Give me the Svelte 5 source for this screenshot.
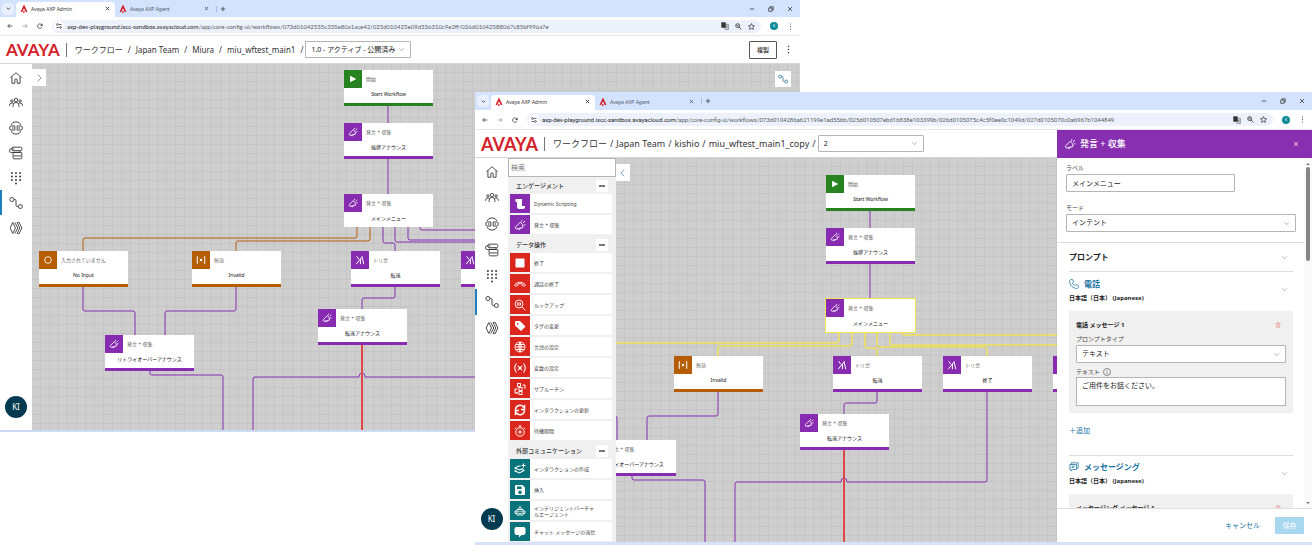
<script>
  const icons = {
    home: '<path d="M2.5 11.5 12 3l9.500 8.500M5 9.500V21h5v-6q0-1.500 2-1.500t2 1.500v6h5V9.500"/>',
    people: '<circle cx="12" cy="7" r="3"/><circle cx="5" cy="8.500" r="2"/><circle cx="19" cy="8.500" r="2"/><path d="M7 19v-3q0-5 5-5t5 5v3M1 17v-1q0-4 4-4 1.500 0 2.500 1M23 17v-1q0-4-4-4-1.500 0-2.500 1"/>',
    bridge: '<path d="M3 7a10 10 0 0 1 18 0M3 17a10 10 0 0 0 18 0"/><path d="M10 8.500H4.500a3.500 3.500 0 0 0 0 7H10zM14 8.500h5.500a3.500 3.500 0 0 1 0 7H14zM6.500 10.500v3M17.500 10.500v3"/>',
    stack: '<rect x="5" y="2" width="17" height="6" rx="2"/><path d="M9 5H3q-2 0-2 2v2q0 2 2 2h16V8"/><rect x="7" y="11" width="15" height="6" rx="1"/><path d="M7 17v3q0 2 2 2h11q2 0 2-2v-3"/>',
    dialpad: '<g fill="currentColor" stroke="none"><circle cx="5" cy="3.500" r="1.600"/><circle cx="12" cy="3.500" r="1.600"/><circle cx="19" cy="3.500" r="1.600"/><circle cx="5" cy="9.500" r="1.600"/><circle cx="12" cy="9.500" r="1.600"/><circle cx="19" cy="9.500" r="1.600"/><circle cx="5" cy="15.500" r="1.600"/><circle cx="12" cy="15.500" r="1.600"/><circle cx="19" cy="15.500" r="1.600"/><circle cx="12" cy="21.500" r="1.600"/></g>',
    flow: '<circle cx="5" cy="6" r="3.500"/><circle cx="19.500" cy="18" r="3.500"/><path d="M8.500 6h1.500q2 0 2 2v8q0 2 2 2h2"/>',
    layers: '<path d="M6.500 2.500 2 12l4.500 9.500L11 12zM10 2.500l5 9.500-5 9.500M14 2.500l3.500 0 4.500 9.500-4.500 9.500H14M14 2.500l4.500 9.500-4.500 9.500"/>',
    chevronRight: '<path d="m9 4 8 8-8 8"/>',
    chevronLeft: '<path d="m15 4-8 8 8 8"/>',
    chevronDown: '<path d="m4 8 8 8 8-8"/>',
    play: '<path d="M5 4v16l15-8z" fill="currentColor" stroke="none"/>',
    speak: '<path d="M13 6 3.500 15.500q-2 3.500 1.500 4.500L18 17q.5-5.500-5-11zM8 19.500q3 4 5.500-1.200M15 5l1-3M18 8l4-4M19.500 12l3.500-.5"/>',
    trigger: '<path d="m4 3 5 7M3 22 18 3M13 10v12M17 5l4 17" stroke-width="2.400"/>',
    ring: '<circle cx="12" cy="12" r="8"/>',
    invalid: '<path d="M5 4H3v16h2M19 4h2v16h-2M9 9l6 6M15 9l-6 6" stroke-width="2.400"/>',
    script: '<path d="M3 2h13v14h6v2q0 4-4 4H10q-4 0-4-4V8H3z" fill="currentColor" stroke="none"/>',
    stop: '<path d="M3 3h18v18H3z" fill="currentColor" stroke="none"/>',
    hangup: '<path d="M2 12.500q10-8.500 20 0 1.500 2-1 4l-4.500-1.500v-3q-4.500-1.500-9 0v3L3 16.500q-2.500-2-1-4z"/>',
    lookup: '<circle cx="10" cy="10" r="8"/><path d="m16 16 7 7M7 7v6M10 6v8M13 7v6"/>',
    tag: '<path d="M2 4q0-2 2-2h8l11 11-9 9L3 12q-1-1-1-2zM6 8a1.500 1.500 0 1 0 0-.1z" fill="currentColor" fill-rule="evenodd" stroke="none"/>',
    globe: '<circle cx="12" cy="12" r="10"/><path d="M2 12h20M12 2v20M12 2q-6 10 0 20 6-10 0-20M3.500 7h17M3.500 17h17"/>',
    variable: '<path d="M5 3q-7 9 0 18M19 3q7 9 0 18M8 8l8 8M16 8l-8 8" stroke-width="2.200"/>',
    subroutine: '<rect x="7" y="1" width="6" height="6"/><rect x="10" y="9" width="6" height="6"/><rect x="10" y="17" width="6" height="6"/><path d="M17 4h5v7l-2-2M7 12H2v8h5M5 18l2 2-2 2" stroke-width="2"/>',
    refresh: '<path d="M3 11a9 9 0 0 1 16-5l2-2v7h-7M21 13a9 9 0 0 1-16 5l-2 2v-7h7" stroke-width="3"/>',
    timer: '<circle cx="12" cy="14" r="8.500"/><path d="M12 10v8M8 14h8M9 2h6M12 2v3M4 5 2 8M20 5l2 3"/>',
    create: '<path d="M13 6H9L2 10l9 4 7-3M4 14l-2 2 9 4 9-5-3-2M19 1v8M15 5h8" stroke-width="2.200"/>',
    save: '<path d="M2 4q0-2 2-2h13l5 5v13q0 2-2 2H4q-2 0-2-2zM6 5v5h9V5zM12 13a3.500 3.500 0 1 0 .1 0z" fill="currentColor" fill-rule="evenodd" stroke="none"/>',
    robot: '<path d="M6 9h12v11H6zM9 9q0-4 3-4t3 4M12 5V2M6 12H2v5h4M18 12h4v5h-4M9 17h6"/><circle cx="9.500" cy="13" r=".8"/><circle cx="14.500" cy="13" r=".8"/>',
    chat: '<path d="M5 2h14q4 0 4 4v8q0 4-4 4h-4l-5 5v-5H5q-4 0-4-4V6q0-4 4-4z" fill="currentColor" stroke="none"/>',
    messages: '<path d="M2 6h16v12H9l-4 4v-4H2zM5 6V2h17v13h-4M6 10h8M6 13h6"/>',
    phone: '<path d="M3 2 8 1l3 6-3 3q2 4 6 6l3-3 6 3-1 5q-1 2-4 2Q3 20 1 6q0-3 2-4z"/>',
    trash: '<path d="M3 6h18M9 6V2h6v4M5 6l1 16h12l1-16M10 10v8M14 10v8" stroke-width="2"/>',
    info: '<circle cx="12" cy="12" r="10.500"/><path d="M12 11v7M12 6v2"/>',
    close: '<path d="m4 4 16 16M20 4 4 20"/>',
    plus: '<path d="M12 3v18M3 12h18"/>',
    minus: '<path d="M3 12h18"/>',
    restore: '<path d="M3 8h13v13H3zM8 8V3h13v13h-5"/>',
    back: '<path d="M22 12H3m8-8-8 8 8 8"/>',
    forward: '<path d="M2 12h19m-8-8 8 8-8 8"/>',
    reload: '<path d="M21 3v7h-7M20 10a9 9 0 1 0 0 5"/>',
    site: '<path d="M12 6h10M2 18h10"/><circle cx="6" cy="6" r="3.500"/><circle cx="18" cy="18" r="3.500"/>',
    translate: '<path d="M2 2h11v14H2z" fill="currentColor"/><path d="M13 7h9v15H12l-2-6M14 12h6M17 12q0 4-3 6M15 14l5 5" stroke-width="1.500"/>',
    zoom: '<circle cx="9" cy="9" r="6.500"/><path d="m14 14 8 8M6 9h6"/>',
    star: '<path d="m12 2 3 7 7.500.6-5.700 5 1.700 7.400-6.500-4L5.500 22l1.700-7.400-5.700-5L9 9z"/>',
    dots: '<g fill="currentColor" stroke="none"><circle cx="12" cy="3.500" r="2"/><circle cx="12" cy="12" r="2"/><circle cx="12" cy="20.500" r="2"/></g>',
    brand: '<path d="M4 21 12 4l8 17M9 21h5" stroke="#d8202a" stroke-width="5"/>'
  };

  const railItems = [
    { icon: 'home', label: 'ホーム' },
    { icon: 'people', label: 'ユーザー' },
    { icon: 'bridge', label: 'チャネル' },
    { icon: 'stack', label: 'キュー' },
    { icon: 'dialpad', label: '番号' },
    { icon: 'flow', label: 'ワークフロー' },
    { icon: 'layers', label: '統合' }
  ];

  const nodes = [
    { id: 'start', x: 312, y: 6, kind: 'start', icon: 'play', type: '開始', name: 'Start Workflow' },
    { id: 'greet', x: 312, y: 59, kind: 'speak', icon: 'speak', type: '発言 + 収集', name: '挨拶アナウンス' },
    { id: 'main', x: 312, y: 130, kind: 'menu', icon: 'speak', type: '発言 + 収集', name: 'メインメニュー' },
    { id: 'noinput', x: 7, y: 187, kind: 'event', icon: 'ring', type: '入力されていません', name: 'No Input' },
    { id: 'invalid', x: 160, y: 187, kind: 'event', icon: 'invalid', type: '無効', name: 'Invalid' },
    { id: 'transfer', x: 319, y: 187, kind: 'speak', icon: 'trigger', type: 'トリガ', name: '転送' },
    { id: 'end', x: 429, y: 187, kind: 'speak', icon: 'trigger', type: 'トリガ', name: '終了' },
    { id: 'other', x: 539, y: 187, kind: 'speak', icon: 'trigger', type: '', name: '' },
    { id: 'announce', x: 286, y: 245, kind: 'speak', icon: 'speak', type: '発言 + 収集', name: '転送アナウンス' },
    { id: 'retry', x: 73, y: 271, kind: 'speak', icon: 'speak', type: '発言 + 収集', name: 'リトライオーバーアナウンス' }
  ];

  const edges = [
    { from: 'start', d: 'M356 42V59' },
    { from: 'greet', d: 'M356 95V130' },
    { from: 'main', color: 'orange', d: 'M325 162v10q0 2-2 2H53q-2 0-2 2v11' },
    { from: 'main', color: 'orange', d: 'M338 162v13q0 2-2 2H206q-2 0-2 2v8' },
    { from: 'main', d: 'M351 162v15q0 2 2 2h8q2 0 2 2v6' },
    { from: 'main', d: 'M363 162v14q0 2 2 2h106q2 0 2 2v7' },
    { from: 'main', d: 'M376 162v12q0 2 2 2h900' },
    { from: 'main', d: 'M388 162v2q0 2 2 2h900' },
    { from: 'noinput', d: 'M51 223v22q0 2 2 2h48q2 0 2 2v22' },
    { from: 'invalid', d: 'M204 223v22q0 2-2 2h-67q-2 0-2 2v22' },
    { from: 'retry', d: 'M118 307v2q0 2 2 2h69q2 0 2 2v900' },
    { from: 'transfer', d: 'M363 223v9q0 2-2 2h-29q-2 0-2 2v9' },
    { from: 'end', d: 'M473 223v88q0 2-2 2H333q0-4-3-4t-3 4H223q-2 0-2 2v900' },
    { from: 'announce', color: 'red', d: 'M330 281v900' }
  ];

  let groups = [
    {
      title: 'エンゲージメント',
      color: 'purple',
      open: true,
      items: [
        ['script', 'Dynamic Scripting'],
        ['speak', '発言 + 収集']
      ]
    },
    {
      title: 'データ操作',
      color: 'red',
      open: true,
      items: [
        ['stop', '終了'],
        ['hangup', '通話の終了'],
        ['lookup', 'ルックアップ'],
        ['tag', 'タグの変更'],
        ['globe', '言語の設定'],
        ['variable', '変数の設定'],
        ['subroutine', 'サブルーチン'],
        ['refresh', 'インタラクションの更新'],
        ['timer', '待機期間']
      ]
    },
    {
      title: '外部コミュニケーション',
      color: 'teal',
      open: true,
      items: [
        ['create', 'インタラクションの作成'],
        ['save', '挿入'],
        ['robot', 'インテリジェントバーチャルエージェント'],
        ['chat', 'チャット メッセージの送信']
      ]
    }
  ];

  const host = 'axp-dev-playground.ixcc-sandbox.avayacloud.com';
  const pathA = '/app/core-config-ui/workflows/073d01042535c335e80a1ace42/025d010425e09d336310c9e2ff/026d01042588067c85bf996a7e';
  const pathB = '/app/core-config-ui/workflows/073d0104286a621199e1ad55bb/025d010507ebd1b838e103399b/026d0105075c4c5f0ee0c1049d/027d0105070c0a6967b1044849';

  let search = '';
  let label = 'メインメニュー';
  let message = 'ご用件をお話ください。';

  function toggleGroup(index) {
    groups[index].open = !groups[index].open;
  }
</script>

{#snippet icon(name, size = 14, weight = 1.5)}
  <svg width={size} height={size} viewBox="0 0 24 24" fill="none" stroke="currentColor" stroke-width={weight} aria-hidden="true">
    {@html icons[name]}
  </svg>
{/snippet}

{#snippet chrome(path)}
  <div class="tabs">
    <button class="tab-search" aria-label="タブを検索">{@render icon('chevronDown', 5, 4)}</button>
    <div class="tab active">
      {@render icon('brand', 8)}
      <span>Avaya AXP Admin</span>
      <button aria-label="閉じる">{@render icon('close', 5, 4)}</button>
    </div>
    <div class="tab">
      {@render icon('brand', 8)}
      <span>Avaya AXP Agent</span>
      <button aria-label="閉じる">{@render icon('close', 5, 4)}</button>
    </div>
    <button class="new-tab" aria-label="新しいタブ">{@render icon('plus', 6, 3)}</button>
    <div class="window-buttons">
      <button aria-label="最小化">{@render icon('minus', 6, 3)}</button>
      <button aria-label="元に戻す">{@render icon('restore', 6, 3)}</button>
      <button aria-label="ウィンドウを閉じる">{@render icon('close', 6, 3)}</button>
    </div>
  </div>
  <div class="address">
    <button aria-label="戻る">{@render icon('back', 6, 3)}</button>
    <button class="dim" aria-label="進む">{@render icon('forward', 6, 3)}</button>
    <button aria-label="再読み込み">{@render icon('reload', 6, 3)}</button>
    <div class="pill">
      <span class="site">{@render icon('site', 6, 3)}</span>
      <span class="url"><b>{host}</b>{path}</span>
      <button aria-label="翻訳">{@render icon('translate', 8, 2)}</button>
      <button aria-label="ズーム">{@render icon('zoom', 7, 3)}</button>
      <button aria-label="ブックマーク">{@render icon('star', 7, 2.5)}</button>
    </div>
    <span class="profile">K</span>
    <button aria-label="メニュー">{@render icon('dots', 7)}</button>
  </div>
{/snippet}

{#snippet header(crumbs, version)}
  <header class="app-header">
    <a class="logo" href="#home">AVAYA</a>
    <nav class="crumbs">
      {#each crumbs as crumb}
        <a href="#{crumb}">{crumb}</a><span>/</span>
      {/each}
    </nav>
    <div class="select version">
      <select aria-label="バージョン"><option>{version}</option></select>
      {@render icon('chevronDown', 7, 2)}
    </div>
    {#if version !== '2'}
      <button class="duplicate">複製</button>
      <button class="more" aria-label="その他">{@render icon('dots', 9)}</button>
    {/if}
  </header>
{/snippet}

{#snippet rail()}
  <nav class="rail">
    {#each railItems as item}
      <a class:current={item.icon === 'flow'} href="#{item.icon}" aria-label={item.label}>
        {@render icon(item.icon, 14)}
      </a>
    {/each}
    <button class="avatar">KI</button>
  </nav>
{/snippet}

{#snippet graph(dx, dy, selected)}
  <div class="stage" style="left: {dx}px; top: {dy}px">
    <svg class="edges" width="1" height="1" fill="none">
      {#each edges as edge}
        <path class={edge.from === selected ? 'yellow' : edge.color ?? 'purple'} d={edge.d} />
      {/each}
    </svg>
    {#each nodes as node}
      <div class="node {node.kind}" class:selected={node.id === selected} style="left: {node.x}px; top: {node.y}px">
        <div class="node-head">
          <span class="node-icon">{@render icon(node.icon, 10, 2)}</span>
          <span>{node.type}</span>
        </div>
        <p>{node.name}</p>
      </div>
    {/each}
  </div>
{/snippet}

<main class="desktop">
  <section class="window first">
    {@render chrome(pathA)}
    <div class="app">
      <div class="workspace">
        {@render header(['ワークフロー', 'Japan Team', 'Miura', 'miu_wftest_main1'], '1.0 - アクティブ - 公開済み')}
        <div class="body">
          {@render rail()}
          <div class="canvas">
            {@render graph(0, 0, '')}
            <button class="toggle" aria-label="パレットを開く">{@render icon('chevronRight', 10, 2)}</button>
            <button class="minimap" aria-label="全体表示">{@render icon('flow', 10, 2)}</button>
          </div>
        </div>
      </div>
    </div>
  </section>

  <section class="window second">
    {@render chrome(pathB)}
    <div class="app">
      <div class="workspace">
        {@render header(['ワークフロー', 'Japan Team', 'kishio', 'miu_wftest_main1_copy'], '2')}
        <div class="body">
          {@render rail()}
          <aside class="palette">
            <input type="search" placeholder="検索" aria-label="検索" bind:value={search} />
            {#each groups as group, index}
              <div class="group">
                <h2>{group.title}</h2>
                <button aria-label="開閉" on:click={() => toggleGroup(index)}>
                  {@render icon(group.open ? 'minus' : 'plus', 8, 4)}
                </button>
              </div>
              {#if group.open}
                <ul>
                  {#each group.items as [glyph, name]}
                    <li>
                      <span class="swatch {group.color}">{@render icon(glyph, 12, 1.8)}</span>
                      <span class="item-name">{name}</span>
                    </li>
                  {/each}
                </ul>
              {/if}
            {/each}
          </aside>
          <div class="canvas">
            {@render graph(-102, 11, 'main')}
            <button class="toggle" aria-label="パレットを閉じる">{@render icon('chevronLeft', 10, 2)}</button>
          </div>
        </div>
      </div>

      <aside class="panel">
        <header>
          {@render icon('speak', 12, 1.8)}
          <h1>発言 + 収集</h1>
          <button aria-label="パネルを閉じる">{@render icon('close', 6, 3)}</button>
        </header>
        <div class="scroller">
          <form id="node-form">
            <div class="basics">
              <label for="node-label">ラベル</label>
              <input id="node-label" class="short" type="text" bind:value={label} />
              <label for="node-mode">モード</label>
              <div class="select">
                <select id="node-mode"><option>インテント</option></select>
                {@render icon('chevronDown', 7, 2)}
              </div>
            </div>
            <div class="sections">
              <div class="section-title">
                <h2>プロンプト</h2>
                {@render icon('chevronDown', 7, 2)}
              </div>
              <div class="channel">
                <div>
                  <h3>{@render icon('phone', 10, 1.8)}電話</h3>
                  <p>日本語（日本） (Japanese)</p>
                </div>
                {@render icon('chevronDown', 7, 2)}
              </div>
              <div class="message">
                <div class="message-head">
                  <h4>電話 メッセージ 1</h4>
                  <button type="button" aria-label="削除">{@render icon('trash', 6)}</button>
                </div>
                <label for="prompt-type">プロンプトタイプ</label>
                <div class="select">
                  <select id="prompt-type"><option>テキスト</option></select>
                  {@render icon('chevronDown', 7, 2)}
                </div>
                <label class="with-info" for="prompt-text">テキスト {@render icon('info', 8, 1.8)}</label>
                <textarea id="prompt-text" bind:value={message}></textarea>
              </div>
              <button class="add" type="button">＋追加</button>
              <div class="channel">
                <div>
                  <h3>{@render icon('messages', 10, 1.8)}メッセージング</h3>
                  <p>日本語（日本） (Japanese)</p>
                </div>
                {@render icon('chevronDown', 7, 2)}
              </div>
              <div class="message">
                <div class="message-head">
                  <h4>メッセージング メッセージ 1</h4>
                  <button type="button" aria-label="削除">{@render icon('trash', 6)}</button>
                </div>
              </div>
            </div>
          </form>
          <div class="scrollbar">
            <i class="up"></i>
            <span class="thumb"></span>
            <i class="down"></i>
          </div>
        </div>
        <footer>
          <button class="cancel">キャンセル</button>
          <button class="save" disabled>保存</button>
        </footer>
      </aside>
    </div>
  </section>
</main>

<style>
  :global(body) {
    margin: 0;
    background: #fff;
    color: #333;
    font-family: 'Noto Sans', 'Noto Sans CJK JP', sans-serif;
    font-size: 6px;
    line-height: 8px;
  }

  * {
    box-sizing: border-box;
  }

  svg {
    flex: none;
    display: block;
  }

  button,
  input,
  select,
  textarea {
    margin: 0;
    padding: 0;
    border: 0;
    background: none;
    color: inherit;
    font: inherit;
  }

  button {
    display: flex;
    align-items: center;
    justify-content: center;
    flex: none;
  }

  a {
    color: inherit;
    text-decoration: none;
  }

  h1,
  h2,
  h3,
  h4,
  p,
  ul {
    margin: 0;
    padding: 0;
  }

  .desktop {
    position: relative;
    height: 100vh;
    overflow: hidden;
  }

  .window {
    position: absolute;
    display: flex;
    flex-direction: column;
    overflow: hidden;
    background: #fff;
  }

  .first {
    --tab-height: 17px;
    --tab-width: 99px;
    --address-height: 19px;
    --header-height: 28px;
    --rail-width: 32px;
    --rail-step: 25px;
    --logo-size: 17px;
    --crumb-size: 8px;
    --crumb-gap: 5px;
    --url-font: 6px Lato, sans-serif;
    top: 0;
    left: 0;
    right: 512px;
    bottom: 113px;
    border-bottom: 2px solid #ccdaf5;
  }

  .second {
    --tab-height: 18px;
    --tab-width: 104px;
    --address-height: 20px;
    --header-height: 28px;
    --rail-width: 33px;
    --rail-step: 26px;
    --logo-size: 18px;
    --crumb-size: 9px;
    --crumb-gap: 3px;
    --url-font: 6px Roboto, sans-serif;
    top: 92px;
    left: 475px;
    right: 0;
    bottom: 0;
    border-bottom: 3px solid #d8e2f7;
  }

  /* browser chrome */
  .tabs {
    display: flex;
    align-items: center;
    flex: none;
    height: var(--tab-height);
    padding-left: 2px;
    background: #d3e2fd;
    font-size: 5px;
  }

  .tab-search {
    width: 12px;
    height: 12px;
    margin-right: 2px;
    border-radius: 4px;
    background: #e8f0fe;
  }

  .tab {
    display: flex;
    align-items: center;
    align-self: flex-end;
    gap: 3px;
    width: var(--tab-width);
    height: 15px;
    padding: 0 5px 2px 4px;
    border-radius: 4px 4px 0 0;
    color: #51596b;
  }

  .tab.active {
    background: #fff;
    color: #333;
  }

  .tab span {
    flex: 1;
  }

  .new-tab {
    margin-left: 2px;
    padding-left: 3px;
    border-left: 1px solid #a5bde8;
  }

  .window-buttons {
    display: flex;
    gap: 13px;
    margin-left: auto;
    padding-right: 7px;
  }

  .address {
    display: flex;
    align-items: center;
    flex: none;
    gap: 9px;
    height: var(--address-height);
    padding: 0 6px 0 7px;
    border-bottom: 1px solid #e3e6ea;
  }

  .dim {
    color: #999;
  }

  .pill {
    display: flex;
    align-items: center;
    flex: 1;
    gap: 6px;
    min-width: 0;
    height: 13px;
    padding: 0 6px 0 2px;
    border-radius: 7px;
    background: #ecf1fb;
  }

  .site {
    display: flex;
    padding: 2px;
    border-radius: 50%;
    background: #fff;
  }

  .url {
    flex: 1;
    min-width: 0;
    margin-left: -3px;
    overflow: hidden;
    color: #5a5f66;
    font: var(--url-font);
    white-space: nowrap;
  }

  .url b {
    color: #222;
    font-weight: 400;
  }

  .profile {
    width: 8px;
    height: 8px;
    border-radius: 50%;
    background: #0b8a99;
    color: #fff;
    font-size: 4px;
    text-align: center;
  }

  /* application */
  .app {
    display: flex;
    flex: 1;
    min-height: 0;
  }

  .workspace {
    display: flex;
    flex: 1;
    flex-direction: column;
    min-width: 0;
  }

  .app-header {
    display: flex;
    align-items: center;
    flex: none;
    height: var(--header-height);
    padding: 0 8px 0 6px;
    border-bottom: 1px solid #d5d5d5;
  }

  .logo {
    padding-right: 6px;
    border-right: 1px solid #777;
    color: #d3222a;
    font-family: Lato, sans-serif;
    font-size: var(--logo-size);
    font-weight: 700;
    line-height: 14px;
  }

  .crumbs {
    display: flex;
    gap: var(--crumb-gap);
    padding: 0 2px 0 8px;
    font-size: var(--crumb-size);
    line-height: 12px;
    white-space: nowrap;
  }

  .select {
    display: flex;
    align-items: center;
    position: relative;
  }

  .select select {
    flex: 1;
    width: 100%;
    height: 18px;
    padding: 0 14px 0 5px;
    border: 1px solid #b5b5b5;
    border-radius: 1px;
    background: #fff;
    color: #222;
    font-size: 7px;
    appearance: none;
  }

  .select svg {
    position: absolute;
    right: 6px;
    color: #777;
    pointer-events: none;
  }

  .version {
    width: 106px;
  }

  .version select {
    height: 17px;
  }

  .duplicate {
    width: 28px;
    height: 18px;
    margin-left: auto;
    border: 1px solid #555;
    border-radius: 1px;
    font-weight: 500;
  }

  .more {
    margin-left: 7px;
    margin-right: -1px;
  }

  .body {
    display: flex;
    flex: 1;
    min-height: 0;
  }

  .rail {
    display: flex;
    flex: none;
    flex-direction: column;
    align-items: center;
    width: var(--rail-width);
    padding: 1px 0 12px;
    background: #fff;
  }

  .rail a {
    display: flex;
    align-items: center;
    justify-content: center;
    flex: none;
    width: 100%;
    height: var(--rail-step);
    border-left: 2px solid transparent;
    border-right: 2px solid transparent;
  }

  .rail a.current {
    border-left-color: #1e7fc0;
  }

  .avatar {
    width: 22px;
    height: 22px;
    margin-top: auto;
    border-radius: 50%;
    background: #043a50;
    color: #fff;
    font-size: 8px;
  }

  .canvas {
    position: relative;
    flex: 1;
    min-width: 0;
    overflow: hidden;
    background:
      repeating-linear-gradient(to right, transparent 0 8px, #c5c5c5 8px 9px),
      repeating-linear-gradient(to bottom, transparent 0 8px, #c5c5c5 8px 9px),
      #cecece;
  }

  .stage {
    position: absolute;
  }

  .edges {
    position: absolute;
    overflow: visible;
  }

  .edges .purple {
    stroke: #842fb0;
  }

  .edges .orange {
    stroke: #b65d0a;
  }

  .edges .yellow {
    stroke: #ffec1f;
  }

  .edges .red {
    stroke: #dc4644;
    stroke-width: 2;
  }

  .node {
    position: absolute;
    width: 89px;
    border-bottom: 3px solid var(--tint);
    background: #fff;
    font-size: 5px;
  }

  .start {
    --tint: #26831f;
  }

  .speak,
  .menu {
    --tint: #872cb0;
  }

  .menu {
    border-bottom: 0;
  }

  .event {
    --tint: #b65d03;
  }

  .selected {
    outline: 1px solid #efe750;
  }

  .node-head {
    display: flex;
    align-items: center;
    gap: 4px;
    color: #666;
  }

  .node-icon {
    display: flex;
    align-items: center;
    justify-content: center;
    width: 18px;
    height: 18px;
    background: var(--tint);
    color: #fff;
  }

  .node p {
    height: 15px;
    color: #111;
    line-height: 13px;
    text-align: center;
    white-space: nowrap;
  }

  .toggle,
  .minimap {
    position: absolute;
    top: 5px;
    background: #fff;
  }

  .toggle {
    left: 0;
    width: 14px;
    height: 17px;
    color: #777;
  }

  .second .toggle {
    top: 6px;
    color: #5b93b5;
  }

  .minimap {
    top: 7px;
    right: 9px;
    width: 16px;
    height: 16px;
    color: #3d7c96;
  }

  /* palette */
  .palette {
    flex: none;
    width: 108px;
    overflow: hidden;
    background: #f0f0f0;
  }

  .palette input {
    display: block;
    width: 100%;
    height: 19px;
    padding: 0 2px;
    border: 1px solid #b5b5b5;
    background: #fff;
    font-size: 7px;
  }

  .palette input::placeholder {
    color: #777;
  }

  .group {
    display: flex;
    align-items: center;
    justify-content: space-between;
    height: 17px;
    padding: 0 8px;
  }

  .group h2 {
    font-size: 6px;
    font-weight: 500;
  }

  .group button {
    width: 12px;
    height: 12px;
    background: #fff;
  }

  .palette ul {
    padding: 0 4px 0 2px;
    list-style: none;
  }

  .palette li {
    display: flex;
    height: 19px;
    margin-bottom: 2px;
    background: #fff;
    font-size: 5px;
    line-height: 6px;
  }

  .swatch {
    display: flex;
    align-items: center;
    justify-content: center;
    flex: none;
    width: 20px;
    color: #fff;
  }

  .swatch.purple {
    background: #872cb0;
  }

  .swatch.red {
    background: #da261c;
  }

  .swatch.teal {
    background: #08737a;
  }

  .item-name {
    align-self: center;
    padding: 0 14px 0 4px;
    color: #444;
  }

  /* settings panel */
  .panel {
    display: flex;
    flex: none;
    flex-direction: column;
    width: 255px;
    background: #fff;
  }

  .panel header {
    display: flex;
    align-items: center;
    flex: none;
    gap: 4px;
    height: 28px;
    padding: 0 13px 0 7px;
    background: #872fb0;
    color: #fff;
  }

  .panel h1 {
    flex: 1;
    font-size: 9px;
    font-weight: 500;
    line-height: 12px;
  }

  .scroller {
    display: flex;
    flex: 1;
    min-height: 0;
  }

  form {
    flex: 1;
    overflow: hidden;
  }

  .basics {
    padding: 6px 8px 10px 9px;
    border-bottom: 1px solid #ddd;
  }

  .basics label,
  .message label {
    display: block;
    color: #444;
  }

  .basics label {
    margin-bottom: 2px;
  }

  .short {
    display: block;
    width: 169px;
    height: 18px;
    margin-bottom: 12px;
    padding: 0 5px;
    border: 1px solid #b5b5b5;
    border-radius: 1px;
    color: #222;
    font-size: 7px;
  }

  .sections {
    padding: 0 11px 0 12px;
  }

  .section-title,
  .channel {
    display: flex;
    align-items: center;
    justify-content: space-between;
    padding-right: 5px;
    color: #777;
  }

  .section-title {
    height: 29px;
    border-bottom: 1px solid #ddd;
  }

  .section-title h2 {
    color: #222;
    font-size: 8px;
  }

  .channel {
    height: 39px;
    padding-bottom: 4px;
  }

  .channel h3 {
    display: flex;
    align-items: center;
    gap: 5px;
    color: #17719f;
    font-size: 8px;
    line-height: 12px;
  }

  .channel p {
    margin-top: 4px;
    color: #222;
    font-weight: 700;
  }

  .message {
    padding: 10px 7px 7px;
    background: #f0f0f0;
  }

  .message-head {
    display: flex;
    align-items: center;
    justify-content: space-between;
    margin-bottom: 6px;
    padding-right: 5px;
    color: #e58984;
  }

  .message-head h4 {
    color: #222;
    font-size: 6px;
  }

  .message label {
    margin-bottom: 2px;
  }

  .message .with-info {
    display: flex;
    align-items: center;
    gap: 3px;
    margin: 5px 0 1px;
  }

  textarea {
    display: block;
    width: 100%;
    height: 29px;
    padding: 4px 5px;
    border: 1px solid #b5b5b5;
    background: #fff;
    color: #222;
    font-size: 7px;
    resize: none;
  }

  .add {
    margin: 14px 0 20px;
    color: #17719f;
    font-size: 7px;
  }

  .add + .channel {
    border-top: 1px solid #ddd;
  }

  .scrollbar {
    display: flex;
    flex-direction: column;
    align-items: center;
    width: 8px;
    padding: 3px 0 2px;
    background: #fafafa;
  }

  .scrollbar i {
    border: 2px solid transparent;
  }

  .scrollbar .up {
    border-bottom-color: #777;
  }

  .scrollbar .down {
    margin-top: auto;
    border-top-color: #777;
  }

  .thumb {
    width: 4px;
    height: 94px;
    margin-top: 2px;
    border-radius: 2px;
    background: #858585;
  }

  .panel footer {
    display: flex;
    align-items: center;
    justify-content: flex-end;
    flex: none;
    gap: 15px;
    height: 34px;
    padding: 0 8px;
    border-top: 1px solid #ddd;
  }

  .cancel {
    color: #17719f;
    font-size: 7px;
  }

  .save {
    width: 29px;
    height: 17px;
    background: #a8d7f0;
    color: #fff;
    font-size: 7px;
  }
</style>
